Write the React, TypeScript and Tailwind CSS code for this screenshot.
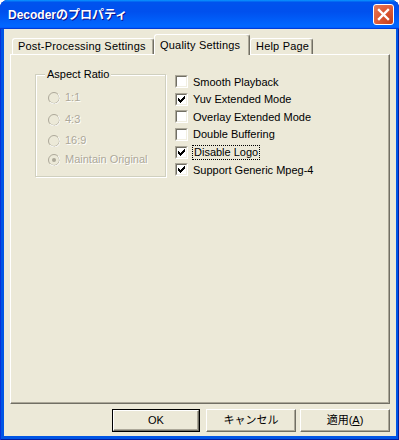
import React from 'react';

const ui = { fontFamily: '"Liberation Sans", Arial, sans-serif' };
const jp = { fontFamily: '"Liberation Sans", "Noto Sans CJK JP", sans-serif' };

function CheckBox({ checked }: { checked: boolean }) {
  return (
    <span className="w-[13px] h-[13px] shrink-0 border border-t-[#aca899] border-l-[#aca899] border-b-white border-r-white">
      <span className="block w-[11px] h-[11px] border border-t-[#716f64] border-l-[#716f64] border-b-[#f1efe2] border-r-[#f1efe2] bg-white">
        {checked && (
          <svg width="9" height="9" viewBox="0 0 9 9" className="block">
            <path d="M1.5 3.5 L3.5 5.5 L7.5 1.5 M1.5 4.5 L3.5 6.5 L7.5 2.5 M1.5 5.5 L3.5 7.5 L7.5 3.5" stroke="#000" strokeWidth="1" fill="none" shapeRendering="crispEdges" />
          </svg>
        )}
      </span>
    </span>
  );
}

function Radio({ label, selected, className }: { label: string; selected?: boolean; className: string }) {
  return (
    <div className={`flex items-center h-[13px] ${className}`}>
      <svg width="12" height="12" viewBox="0 0 12 12" className="shrink-0">
        <circle cx="6" cy="6" r="5.5" fill="#ece9d8" stroke="#aca899" />
        <path d="M10.3 2.2 A5.5 5.5 0 0 1 2.2 10.3" stroke="#fff" fill="none" />
        {selected && <circle cx="6" cy="6" r="2" fill="#aca899" />}
      </svg>
      <span className="ml-[5px] text-[11px] text-[#aca899] [text-shadow:1px_1px_0_#fff]">{label}</span>
    </div>
  );
}

function Option({ label, checked, focused }: { label: string; checked: boolean; focused?: boolean }) {
  return (
    <div className="flex items-center h-[17.6px]">
      <CheckBox checked={checked} />
      {focused ? (
        <span className="ml-[4px] border border-dotted border-black px-[1px] leading-[13px] text-[11px] text-black">{label}</span>
      ) : (
        <span className="ml-[5px] text-[11px] text-black">{label}</span>
      )}
    </div>
  );
}

function Tab({ label, active, width }: { label: string; active?: boolean; width: string }) {
  if (active) {
    return (
      <div className={`${width} relative z-10 h-[21px] -mb-[1px] bg-[#ece9d8] border-t border-l border-white border-r border-r-[#716f64] shadow-[inset_-1px_0_0_#aca899] rounded-t-[3px] pl-[5px] pt-[2px] text-[11px] tracking-[0.2px] text-black`}>
        {label}
      </div>
    );
  }
  return (
    <div className={`${width} h-[16px] bg-[#ece9d8] border-t border-l border-white border-r border-r-[#716f64] shadow-[inset_-1px_0_0_#aca899] rounded-t-[3px] pl-[5px] text-[11px] tracking-[0.2px] leading-[15px] text-black`}>
      {label}
    </div>
  );
}

function PushButton({ children, width, isDefault, className = '' }: { children: React.ReactNode; width: string; isDefault?: boolean; className?: string }) {
  return (
    <div className={`${width} h-[23px] ${isDefault ? 'border border-black' : ''} ${className}`}>
      <div className="w-full h-full flex items-center justify-center bg-[#ece9d8] border-t border-l border-white border-r border-b border-r-[#716f64] border-b-[#716f64] shadow-[inset_-1px_-1px_0_#aca899] text-[11px] text-black">
        {children}
      </div>
    </div>
  );
}

export default function App() {
  return (
    <div className="w-[399px] h-[440px] bg-white" style={ui}>
      <div className="w-full h-full flex flex-col rounded-t-[8px] overflow-hidden bg-[#0055e5] shadow-[inset_1px_0_0_#0831d9,inset_-1px_0_0_#001ea0,inset_0_-1px_0_#001ea0]">
        <div className="h-[29px] shrink-0 flex items-center justify-between pl-[8px] pr-[5px] bg-[linear-gradient(180deg,#0997ff,#0053ee_8%,#0050ee_40%,#06f_88%,#06f_93%,#005bff_95%,#003dd7_96%,#003dd7)]">
          <span className="text-[12px] font-bold text-white [text-shadow:1px_1px_0_#0f1089]" style={jp}>
            Decoderのプロパティ
          </span>
          <div className="w-[21px] h-[21px] rounded-[3px] border border-white bg-[radial-gradient(circle_at_90%_90%,#c8401c_0%,#dc5a36_55%,#e57c5c_100%)] flex items-center justify-center">
            <svg width="13" height="13" viewBox="0 0 13 13">
              <path d="M2 2 L11 11 M11 2 L2 11" stroke="#fff" strokeWidth="2.4" strokeLinecap="square" />
            </svg>
          </div>
        </div>

        <div className="flex-1 ml-[4px] mr-[3px] mb-[4px] bg-[#ece9d8] flex flex-col px-[6px] pt-[5px]">
          <div className="h-[20px] flex items-end">
            <Tab label="Post-Processing Settings" width="w-[142px] ml-[2px]" />
            <Tab label="Quality Settings" width="w-[96px]" active />
            <Tab label="Help Page" width="w-[63px]" />
          </div>

          <div className="h-[350px] border-t border-l border-white border-r border-b border-r-[#716f64] border-b-[#716f64] shadow-[inset_-1px_-1px_0_#aca899] flex items-start">
            <div className="relative ml-[24px] mt-[19px] w-[131px] h-[103px] border border-[#d0d0bf] shadow-[1px_1px_0_#fff,inset_1px_1px_0_#fff] flex flex-col pl-[12px]">
              <span className="absolute -top-[8px] left-[9px] px-[2px] bg-[#ece9d8] text-[11px] leading-[14px] text-black">Aspect Ratio</span>
              <Radio label="1:1" className="mt-[16px]" />
              <Radio label="4:3" className="mt-[9px]" />
              <Radio label="16:9" className="mt-[8px]" />
              <Radio label="Maintain Original" selected className="mt-[6px]" />
            </div>

            <div className="ml-[9px] mt-[18px] flex flex-col">
              <Option label="Smooth Playback" checked={false} />
              <Option label="Yuv Extended Mode" checked />
              <Option label="Overlay Extended Mode" checked={false} />
              <Option label="Double Buffering" checked={false} />
              <Option label="Disable Logo" checked focused />
              <Option label="Support Generic Mpeg-4" checked />
            </div>
          </div>

          <div className="mt-[5px] flex justify-end">
            <PushButton width="w-[88px]" isDefault>OK</PushButton>
            <PushButton width="w-[90px]" className="ml-[6px]">
              <span className="text-[11px]" style={jp}>キャンセル</span>
            </PushButton>
            <PushButton width="w-[90px]" className="ml-[4px]">
              <span className="text-[11px]" style={jp}>
                適用(<span className="underline">A</span>)
              </span>
            </PushButton>
          </div>
        </div>
      </div>
    </div>
  );
}
